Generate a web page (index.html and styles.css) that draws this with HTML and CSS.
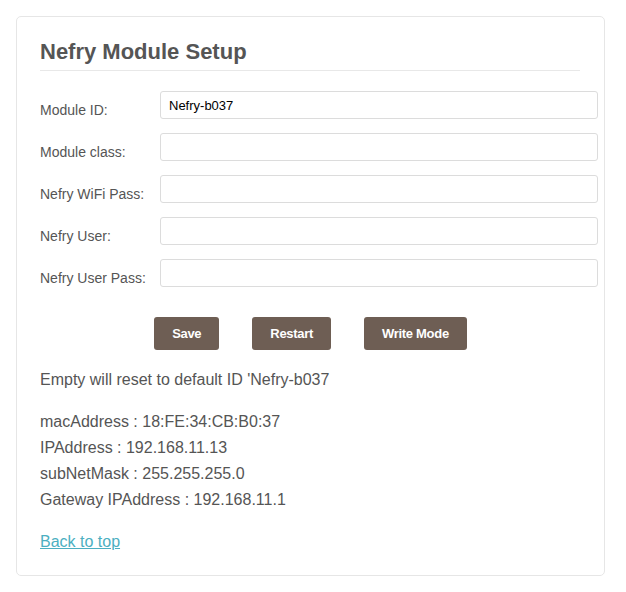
FILE: index.html
```html
<!DOCTYPE html>
<html>
<head>
<meta charset="utf-8">
<link rel="stylesheet" href="styles.css">
</head>
<body>
<div class="card">
  <h1 class="title">Nefry Module Setup</h1>
  <form class="form">
    <div class="row"><label class="label">Module ID:</label><input class="input" type="text" value="Nefry-b037"></div>
    <div class="row"><label class="label">Module class:</label><input class="input" type="text"></div>
    <div class="row"><label class="label">Nefry WiFi Pass:</label><input class="input" type="password"></div>
    <div class="row"><label class="label">Nefry User:</label><input class="input" type="text"></div>
    <div class="row"><label class="label">Nefry User Pass:</label><input class="input" type="password"></div>
    <div class="buttons">
      <button class="btn" type="button">Save</button>
      <button class="btn" type="button">Restart</button>
      <button class="btn" type="button">Write Mode</button>
    </div>
  </form>
  <p class="note">Empty will reset to default ID 'Nefry-b037</p>
  <div class="info">
    <div>macAddress : 18:FE:34:CB:B0:37</div>
    <div>IPAddress : 192.168.11.13</div>
    <div>subNetMask : 255.255.255.0</div>
    <div>Gateway IPAddress : 192.168.11.1</div>
  </div>
  <a class="top-link" href="#">Back to top</a>
</div>
</body>
</html>
```
FILE: styles.css
```css
html, body {
  margin: 0;
  padding: 0;
  background: #fff;
}
body {
  padding: 16px 0 0 16px;
  font-family: "Liberation Sans", Arial, sans-serif;
  color: #555;
}
.card {
  box-sizing: border-box;
  width: 589px;
  height: 560px;
  border: 1px solid #e6e6e6;
  border-radius: 5px;
  padding: 20px 0 0 23px;
}
.title {
  margin: 0;
  font-size: 22px;
  font-weight: bold;
  line-height: 30px;
  color: #555;
  padding-bottom: 3px;
  border-bottom: 1px solid #e8e8e8;
  width: 540px;
}
.form {
  margin-top: 20px;
}
.row {
  display: flex;
  align-items: flex-start;
  height: 28px;
  margin-bottom: 14px;
}
.label {
  width: 120px;
  flex: none;
  font-size: 14px;
  color: #555;
  padding-top: 11px;
  line-height: 16px;
}
.input {
  flex: none;
  box-sizing: border-box;
  width: 438px;
  height: 28px;
  border: 1px solid #dcdcdc;
  border-radius: 3px;
  padding: 0 8px;
  font-family: "Liberation Sans", Arial, sans-serif;
  font-size: 13px;
  color: #000;
  outline: none;
}
.buttons {
  display: flex;
  justify-content: center;
  gap: 33px;
  margin-top: 30px;
  width: 541px;
}
.btn {
  height: 33px;
  padding: 0 18px;
  border: none;
  border-radius: 3px;
  background: #6e5e54;
  color: #fff;
  font-family: "Liberation Sans", Arial, sans-serif;
  font-size: 13px;
  letter-spacing: -0.3px;
  font-weight: bold;
}
.note {
  margin: 17px 0 0 0;
  font-size: 16px;
  line-height: 26px;
  color: #555;
}
.info {
  margin-top: 16px;
  font-size: 16px;
  line-height: 26px;
  color: #555;
}
.top-link {
  display: inline-block;
  margin-top: 16px;
  font-size: 16px;
  line-height: 26px;
  color: #4bafc1;
}
```
